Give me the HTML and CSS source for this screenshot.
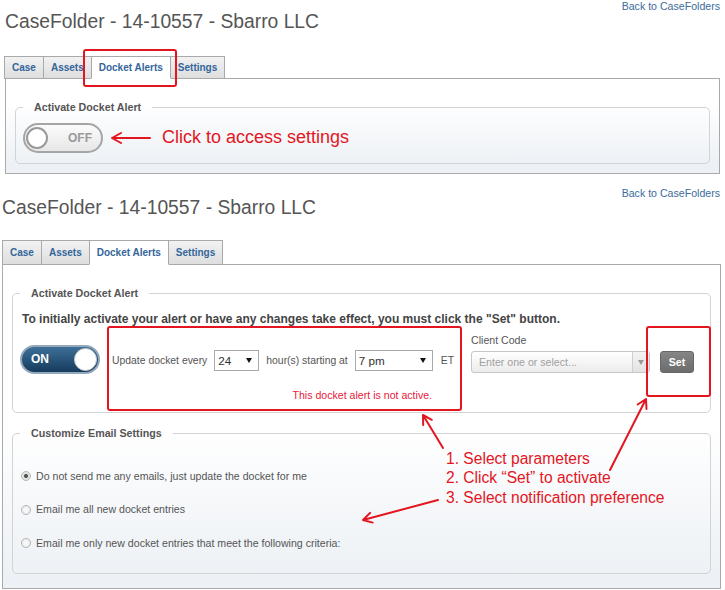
FILE: index.html
```html
<!DOCTYPE html>
<html lang="en">
<head>
    <meta charset="UTF-8">
    <title>CaseFolder - Docket Alerts</title>
    <link rel="stylesheet" href="styles.css">
</head>
<body>
<div class="page">
    <section class="casefolder casefolder-before">
        <header class="case-head">
            <h1 class="case-title">CaseFolder - 14-10557 - Sbarro LLC</h1>
            <a class="back-link" href="#">Back to CaseFolders</a>
        </header>
        <ul class="tabs">
            <li>Case</li>
            <li>Assets</li>
            <li class="active">Docket Alerts</li>
            <li>Settings</li>
        </ul>
        <div class="panel">
            <fieldset class="group">
                <legend>Activate Docket Alert</legend>
                <div class="toggle toggle-off">
                    <span class="knob"></span>
                    <span class="toggle-label">OFF</span>
                </div>
            </fieldset>
        </div>
    </section>

    <section class="casefolder casefolder-after">
        <header class="case-head">
            <h1 class="case-title">CaseFolder - 14-10557 - Sbarro LLC</h1>
            <a class="back-link" href="#">Back to CaseFolders</a>
        </header>
        <ul class="tabs">
            <li>Case</li>
            <li>Assets</li>
            <li class="active">Docket Alerts</li>
            <li>Settings</li>
        </ul>
        <div class="panel">
            <fieldset class="group group-activate">
                <legend>Activate Docket Alert</legend>
                <p class="hint">To initially activate your alert or have any changes take effect, you must click the "Set" button.</p>
                <div class="alert-row">
                    <div class="toggle toggle-on">
                        <span class="toggle-label">ON</span>
                        <span class="knob"></span>
                    </div>
                    <div class="schedule">
                        <div class="schedule-controls">
                            <span>Update docket every</span>
                            <div class="select select-hours">24<span class="caret"></span></div>
                            <span>hour(s) starting at</span>
                            <div class="select select-time">7 pm<span class="caret"></span></div>
                            <span class="tz">ET</span>
                        </div>
                        <div class="status">This docket alert is not active.</div>
                    </div>
                    <div class="client">
                        <label>Client Code</label>
                        <div class="combo">
                            <span class="combo-text">Enter one or select...</span>
                            <span class="combo-btn"><span class="caret caret-grey"></span></span>
                        </div>
                    </div>
                    <button class="set-btn">Set</button>
                </div>
            </fieldset>

            <fieldset class="group group-email">
                <legend>Customize Email Settings</legend>
                <label class="choice"><input type="radio" name="email" checked> Do not send me any emails, just update the docket for me</label>
                <label class="choice"><input type="radio" name="email"> Email me all new docket entries</label>
                <label class="choice"><input type="radio" name="email"> Email me only new docket entries that meet the following criteria:</label>
            </fieldset>
        </div>
    </section>

    <svg class="marks" width="725" height="590" viewBox="0 0 725 590">
        <g fill="none" stroke="#e3161f" stroke-width="2">
            <rect x="84" y="50" width="92" height="36" rx="2"/>
            <rect x="108" y="327" width="353" height="83" rx="2"/>
            <rect x="647" y="327" width="63" height="69" rx="2"/>
        </g>
        <g fill="none" stroke="#e3161f" stroke-width="2" stroke-linecap="round" stroke-linejoin="round">
            <path d="M150 138 H112 M121 133 L112 138 L121 143"/>
            <path d="M443 448 L423 415 M423.2 425 L423 415 L431.8 419.8"/>
            <path d="M610 470 L646 399 M637.6 404.5 L646 399 L646.5 409"/>
            <path d="M438 500 L363 520 M372.7 522.6 L363 520 L370.1 512.9"/>
        </g>
    </svg>
    <div class="note note-click">Click to access settings</div>
    <div class="note note-steps">
        <div>1. Select parameters</div>
        <div>2. Click “Set” to activate</div>
        <div>3. Select notification preference</div>
    </div>
</div>
</body>
</html>
```

FILE: styles.css
```css
body {
    margin: 0;
    font-family: "Liberation Sans", Arial, sans-serif;
    font-size: 10.6px;
    color: #555;
    background: #fff;
}

.page {
    position: relative;
    width: 725px;
    height: 590px;
    overflow: hidden;
}

.casefolder-before {
    margin: 0 5px 0 5px;
}

.casefolder-after {
    margin: 13px 4px 0 2px;
}

.case-head {
    display: flex;
    justify-content: space-between;
    align-items: flex-start;
}

.case-title {
    margin: 11px 0 0;
    font-size: 19.3px;
    line-height: 22px;
    font-weight: normal;
    color: #555;
}

.casefolder-after .case-title {
    margin-top: 9.5px;
}

.back-link {
    font-size: 10.6px;
    line-height: 13px;
    color: #3b6c9c;
    text-decoration: none;
}

.casefolder-after .back-link {
    margin-right: 1px;
}

/* tabs */

.tabs {
    display: flex;
    list-style: none;
    margin: 23px 0 -1px -1px;
    padding: 0;
}

.casefolder-after .tabs {
    margin-top: 21.5px;
    margin-left: 0;
}

.tabs li {
    position: relative;
    padding: 0 7px;
    margin-right: -1px;
    border: 1px solid #a9a9a9;
    background: linear-gradient(#f2f2f2, #dedede);
    font-size: 10px;
    font-weight: bold;
    line-height: 21px;
    color: #33669a;
}

.casefolder-after .tabs li {
    line-height: 23px;
}

.tabs li.active {
    background: #fff;
    border-bottom-color: #fff;
    z-index: 1;
}

/* panel + groups */

.panel {
    border: 1px solid #a9a9a9;
    padding: 21.5px 9px 9px;
    background: linear-gradient(#fff 25%, #edf1f5 90%);
}

.casefolder-after .panel {
    padding-bottom: 14px;
    background: linear-gradient(#fff 50%, #edf1f5 96%);
}

.group {
    margin: 0;
    padding: 0 7px 10px;
    border: 1px solid #d3d3d3;
    border-radius: 5px;
}

.group legend {
    padding: 0 11px;
    font-size: 10.7px;
    font-weight: bold;
    line-height: 13px;
    color: #555;
}

.group-activate {
    padding-bottom: 10px;
}

.group-email {
    margin-top: 14px;
    padding-bottom: 23px;
}

/* toggles */

.toggle {
    box-sizing: border-box;
    display: flex;
    align-items: center;
    width: 80px;
    height: 30px;
    border-radius: 15px;
    border: 2px solid #a5a5a5;
}

.knob {
    box-sizing: border-box;
    width: 22px;
    height: 22px;
    border-radius: 50%;
    background: #fff;
}

.toggle-label {
    font-size: 12px;
    font-weight: bold;
}

.toggle-off {
    margin-top: 9.5px;
    background: linear-gradient(#fbfbfb, #e7e7e7);
}

.toggle-off .knob {
    margin-left: 1px;
    border: 2px solid #999;
}

.toggle-off .toggle-label {
    margin-left: auto;
    margin-right: 9px;
    color: #9a9a9a;
}

.toggle-on {
    flex: none;
    margin-top: 11px;
    height: 29px;
    border-color: #93a8bb;
    background: linear-gradient(#3d6f98, #163b5c);
}

.toggle-on .toggle-label {
    margin-left: 9px;
    color: #fff;
}

.toggle-on .knob {
    width: 23px;
    height: 23px;
    margin-left: auto;
    margin-right: 1px;
    border: 1px solid #c8c8c8;
}

/* activate row */

.hint {
    margin: 12px 0 0 2px;
    font-size: 12px;
    font-weight: bold;
    line-height: 14px;
    color: #444;
}

.alert-row {
    display: flex;
    align-items: flex-start;
    margin-top: 8.5px;
    line-height: 13px;
}

.schedule {
    margin: 16px 0 0 12px;
}

.schedule-controls {
    display: flex;
    align-items: center;
    gap: 7px;
    font-size: 10.4px;
}

.schedule-controls .tz {
    margin-left: 1px;
}

.select {
    box-sizing: border-box;
    display: flex;
    align-items: center;
    height: 21px;
    padding-left: 3px;
    border: 1px solid #a9a9a9;
    background: #fff;
    font-size: 11.7px;
    color: #333;
}

.select-hours {
    width: 45px;
}

.select-time {
    width: 78px;
}

.caret {
    width: 0;
    height: 0;
    margin-left: auto;
    margin-right: 6px;
    border-left: 3px solid transparent;
    border-right: 3px solid transparent;
    border-top: 5px solid #111;
}

.caret-grey {
    margin: 0;
    border-top-color: #999;
}

.status {
    margin-top: 17.5px;
    padding-right: 22px;
    text-align: right;
    color: #e8203c;
}

.client {
    display: flex;
    flex-direction: column;
    margin-left: 17px;
}

.client label {
    margin-bottom: 4px;
}

.combo {
    box-sizing: border-box;
    display: flex;
    width: 179px;
    height: 22px;
    border: 1px solid #c6c6c6;
    border-radius: 3px;
    background: linear-gradient(#fff, #ececec);
}

.combo-text {
    flex: 1;
    align-self: center;
    padding-left: 7px;
    color: #a0a0a0;
}

.combo-btn {
    display: flex;
    align-items: center;
    justify-content: center;
    width: 16px;
    border-left: 1px solid #cfcfcf;
    background: linear-gradient(#f4f4f4, #e2e2e2);
}

.set-btn {
    margin: 17px 0 0 10px;
    width: 34px;
    height: 22px;
    padding: 0;
    border: 1px solid #666;
    border-radius: 3px;
    background: linear-gradient(#858585, #6c6c6c);
    font-family: inherit;
    font-size: 10.6px;
    font-weight: bold;
    color: #fff;
}

/* email choices */

.choice {
    display: flex;
    align-items: center;
    margin-top: 20.5px;
    margin-left: 1px;
    line-height: 13px;
    color: #555;
}

.choice:first-of-type {
    margin-top: 30px;
}

.choice input {
    appearance: none;
    box-sizing: border-box;
    width: 10px;
    height: 10px;
    margin: 0 5px 0 0;
    border: 1px solid #b5b5b5;
    border-radius: 50%;
    background: radial-gradient(#fff, #e4e4e4);
}

.choice input:checked {
    background: radial-gradient(#555 30%, #ddd 40%, #f2f2f2);
}

/* annotations */

.marks {
    position: absolute;
    top: 0;
    left: 0;
    pointer-events: none;
}

.note {
    position: absolute;
    color: #e3161f;
}

.note-click {
    left: 162px;
    top: 127px;
    font-size: 18px;
    line-height: 20px;
}

.note-steps {
    left: 446px;
    top: 449px;
    font-size: 15.6px;
    line-height: 19.3px;
}
```
